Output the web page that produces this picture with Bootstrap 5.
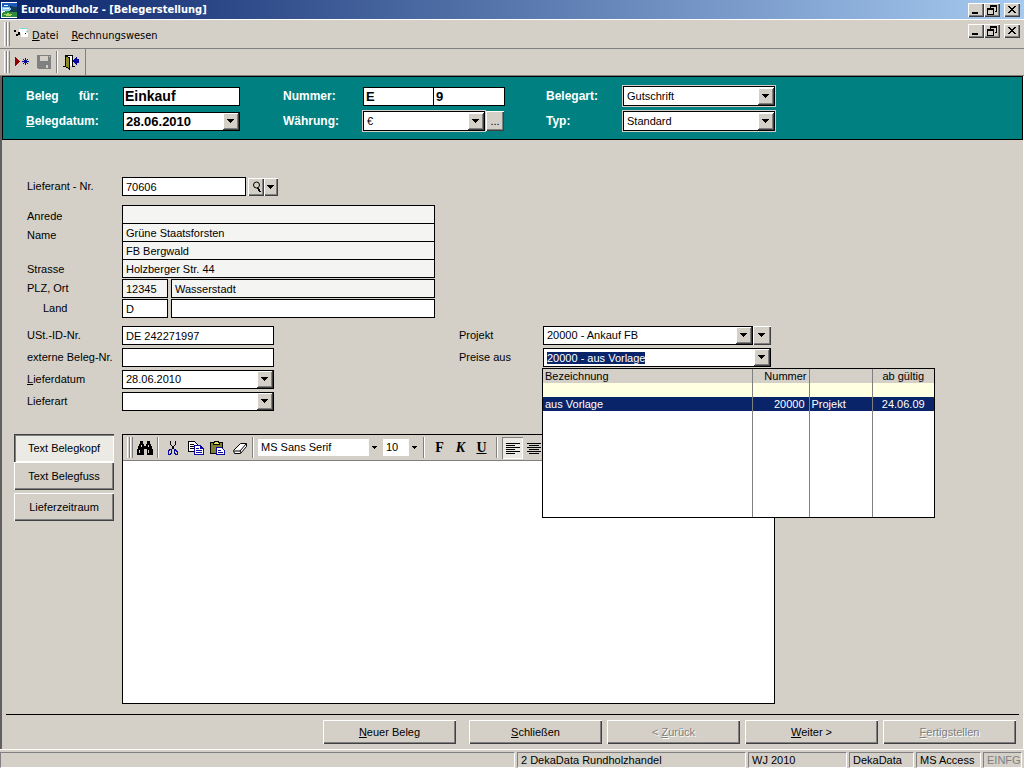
<!DOCTYPE html>
<html lang="de">
<head>
<meta charset="utf-8">
<meta name="viewport" content="width=device-width, initial-scale=1">
<title>EuroRundholz - [Belegerstellung]</title>
<link href="https://cdn.jsdelivr.net/npm/bootstrap@5.3.0/dist/css/bootstrap.min.css" rel="stylesheet">
<style>
:root{--face:#d4d0c8;--shade:#808080;--navy:#0a246a;
--arrow:url("data:image/svg+xml,%3Csvg xmlns='http://www.w3.org/2000/svg' width='16' height='17' shape-rendering='crispEdges'%3E%3Cpath fill='%23404040' d='M0 0h16v17H0z'/%3E%3Cpath fill='%23fff' d='M0 0h15v16H0z'/%3E%3Cpath fill='%23808080' d='M1 1h14v15H1z'/%3E%3Cpath fill='%23d4d0c8' d='M1 1h13v14H1z'/%3E%3Cpath d='M4 6h7v1H4zM5 7h5v1H5zM6 8h3v1H6zM7 9h1v1H7z'/%3E%3C/svg%3E");
--arrow-flat:url("data:image/svg+xml,%3Csvg xmlns='http://www.w3.org/2000/svg' width='10' height='17' shape-rendering='crispEdges'%3E%3Cpath fill='%23d4d0c8' d='M0 0h10v17H0z'/%3E%3Cpath d='M3 7h5v1H3zM4 8h3v1H4zM5 9h1v1H5z'/%3E%3C/svg%3E");}
body{background:var(--face);color:#000;font:11px/13px "Liberation Sans",Arial,sans-serif}
svg{display:block;shape-rendering:crispEdges}

/* window chrome */
.shell-font{font-family:"DejaVu Sans Condensed","DejaVu Sans",sans-serif}
.titlebar{height:19px;background:linear-gradient(90deg,#0a246a,#a6caf0);color:#fff}
.app-icon{margin:0 4px 0 1px}
.menubar{height:30px;border-top:1px solid #fff;border-bottom:1px solid var(--shade)}
.menubar a{color:#000;text-decoration:none;padding-top:2px}
.menubar a+a{margin-left:13px}
.toolbar{height:27px;border-bottom:1px solid var(--shade)}
.toolgroup{border-right:1px solid var(--shade);padding:0 6px 0 4px}
.grips{width:6px;align-self:stretch;margin:2px 0;background:linear-gradient(90deg,#fff 1px,var(--face) 1px 2px,var(--shade) 2px 3px,#fff 3px 4px,var(--face) 4px 5px,var(--shade) 5px)}
.vline{width:2px;align-self:stretch;margin:2px 0;border-left:1px solid var(--shade);border-right:1px solid #fff}

/* buttons */
.btn{--bs-btn-color:#000;--bs-btn-hover-color:#000;--bs-btn-active-color:#000;--bs-btn-disabled-color:#808080;--bs-btn-disabled-opacity:1;--bs-btn-font-size:11px;--bs-btn-line-height:13px;--bs-btn-padding-x:0;--bs-btn-padding-y:0;--bs-btn-border-radius:0;--bs-btn-border-width:0;background:var(--face)}
.btn:disabled{text-shadow:1px 1px #fff}
.raised{box-shadow:inset 1px 1px #fff,inset -1px -1px #404040,inset -2px -2px var(--shade)}
.win{width:16px;height:14px;display:grid;place-items:center}
.plain{background:none}

/* form header */
.form-area{border-left:2px solid #606060;border-right:1px solid #fff}
.kopf{background:#008080;border:1px solid #000;color:#fff;font-weight:bold;font-size:12px;padding:9px 0 8px 23px;display:grid;grid-template-columns:97px 160px 80px 183px 77px 152px;row-gap:5px;align-items:center;grid-auto-rows:20px}

/* fields */
.form-control,.form-select{height:19px;min-height:0;border:1px solid #000;border-radius:0;padding:0 3px;font:inherit;color:#000;background-color:#fff;box-shadow:none}
.form-control:focus,.form-select:focus{border-color:#000;box-shadow:none;color:#000;background-color:#fff}
.form-control::selection{background:var(--navy);color:#fff}
.form-select,.combo{background-image:var(--arrow);background-repeat:no-repeat;background-position:right 0 center;background-size:16px 17px;padding-right:18px}
.framed{height:20px;outline:1px solid var(--face);font-size:11px;font-weight:normal}
.big{font-size:14px;padding:0 1px}
.mid{font-size:13px;padding:0 2px}
.locked{background-color:#f4f4f2!important}
.w-kopf{width:117px}.w-half{width:71px}.w-adr{width:313px}.w-plz{width:46px}.w-feld{width:152px}.w-proj{width:210px}.w-preis{width:228px}.w-nr{width:124px}.w-curr{width:122px}
.w-ort{width:264px;margin-left:3px}
.pick-btn{width:18px;margin-left:1px}
.find-btn{margin-left:2px}

/* form body */
.daten{padding:37px 0 0 25px}
.zeile{display:flex;align-items:center}
.zeile>label{width:95px;flex:none}
.adr-block{margin-top:9px}
.adr .form-control+.form-control{margin-top:-1px}
.adr-labels{width:95px;padding-top:5px}
.adr-labels .nach-anrede{margin-top:6px}
.adr-labels .nach-name{margin-top:21px}
.ort-block{margin-top:1px;row-gap:1px}
.stapel{row-gap:3px}
.left-col{width:432px}
.right-col label{width:84px}

/* open list of the price combo box */
.picker{width:393px;height:150px;top:20px;left:-1px;border:1px solid #000;background:#fff;z-index:5}
.picker table{width:100%;height:100%;border-collapse:collapse}
.picker th,.picker td{height:14px;padding:0 2px;font-weight:normal;border-right:1px solid var(--shade);line-height:14px}
.picker th:last-child,.picker td:last-child{border-right:0;text-align:center}
.picker th{background:var(--face)}
.picker .leer td{background:#ffffe1}
.picker .wahl td{background:var(--navy);color:#fff}
.picker .rest td{height:auto}
.c-name{width:209px}.c-nr{width:57px}.c-typ{width:63px}

/* text editor */
.werk{padding:23px 12px 10px 12px}
.side{width:100px}
.side .btn{height:28px}
.side .btn:last-child{margin-top:3px}
.side .on{box-shadow:inset 1px 1px #404040,inset 2px 2px var(--shade),inset -1px -1px #fff;background:#eceae5}
.editor{max-width:653px;border:1px solid #000;background:#fff;min-height:200px}
.edbar{height:26px;background:var(--face);border-bottom:1px solid var(--shade);padding-left:4px}
.edbar .form-select{height:17px;border:0;background-image:var(--arrow-flat);background-size:10px 17px;padding-right:10px}
.edbar .ico{margin-left:6px}
.edbar .font{width:121px}
.edbar .size{width:36px}
.fmt{width:21px;height:22px;font:bold 14px/20px "Liberation Serif",serif}
.fmt.on{box-shadow:inset 1px 1px var(--shade),inset -1px -1px #fff;background:#ebe9e4}
.editor textarea{border:0;resize:none;height:auto}

/* bottom rows */
.rule{height:1px;background:#000;margin:0 4px}
.navrow{padding:5px 7px 5px 0;gap:5px}
.navrow .btn{width:133px;height:24px}
.navrow .neu{margin-right:8px}
.statusbar{height:19px;border-top:1px solid #fff;padding:2px 2px 0 0;gap:2px}
.statusbar span{border:1px solid;border-color:var(--shade) #fff #fff var(--shade);height:16px;line-height:15px;padding-left:3px;white-space:nowrap}
.p-firma{width:229px}.p-wj{width:99px}.p-app{width:65px}.p-mode{width:39px;color:#808080}
</style>
</head>
<body class="d-flex flex-column min-vh-100">
<header class="shell-font">
  <div class="titlebar d-flex align-items-center">
    <svg width="16" height="16" class="app-icon bg-white" viewBox="0 0 16 16"><path fill="#1c5cb8" d="M1 1h15v5H1z"/><path fill="#8cc8f0" d="M1 5h9v4H1z"/><path fill="#e8f6ff" d="M3 3h4v1H3zM2 6h6v1H2z"/><path fill="#163c54" d="M9 4h3v1h4v6H7V9h2V8h1V6H9z"/><path fill="#2e8d3a" d="M1 11l4-2 5 1h6v5H1z"/><path fill="#a8d860" d="M1 13l6-2 5 2-4 1z"/></svg>
    <strong>EuroRundholz - [Belegerstellung]</strong>
    <div class="d-flex ms-auto me-1">
      <button class="btn raised win" aria-label="Minimieren"><svg width="14" height="12"><path d="M3 8h6v2H3z"/></svg></button>
      <button class="btn raised win" aria-label="Wiederherstellen"><svg width="14" height="12"><path d="M5 1h7v2H5zM5 3h1v1H5zM11 3h1v5h-1zM10 7h1v1h-1zM2 4h7v2H2zM2 6h1v5H2zM8 6h1v5H8zM3 10h5v1H3z"/></svg></button>
      <button class="btn raised win ms-1" aria-label="Schließen"><svg width="14" height="12"><path d="M3 2h2v1h1v1h2V3h1V2h2v1h-1v1H9v1H8v1h1v1h1v1h1v1H9V8H8V7H6v1H5v1H3V8h1V7h1V6h1V5H5V4H4V3H3z"/></svg></button>
    </div>
  </div>
  <nav class="menubar d-flex align-items-center">
    <span class="grips ms-1"></span>
    <svg width="14" height="16" class="ms-1" viewBox="0 0 14 16"><path fill="#fff" d="M5 3h8v4h1v4H7V7H5z"/><path fill="#7fd8d8" d="M6 2h7v1H6zM12 5h2v1h-2z"/><path d="M0 4h2v2H0zM4 6h2v3H4zM2 8h2v2H2zM11 7h1v1h-1z"/></svg>
    <a href="#" class="ms-1"><u>D</u>atei</a>
    <a href="#"><u>R</u>echnungswesen</a>
    <div class="d-flex ms-auto align-self-start pt-1 me-1">
      <button class="btn raised win" aria-label="Fenster minimieren"><svg width="14" height="12"><path d="M3 8h6v2H3z"/></svg></button>
      <button class="btn raised win" aria-label="Fenster wiederherstellen"><svg width="14" height="12"><path d="M5 1h7v2H5zM5 3h1v1H5zM11 3h1v5h-1zM10 7h1v1h-1zM2 4h7v2H2zM2 6h1v5H2zM8 6h1v5H8zM3 10h5v1H3z"/></svg></button>
      <button class="btn raised win ms-1" aria-label="Fenster schließen"><svg width="14" height="12"><path d="M3 2h2v1h1v1h2V3h1V2h2v1h-1v1H9v1H8v1h1v1h1v1h1v1H9V8H8V7H6v1H5v1H3V8h1V7h1V6h1V5H5V4H4V3H3z"/></svg></button>
    </div>
  </nav>
  <div class="toolbar d-flex">
    <div class="toolgroup d-flex align-items-center">
      <span class="grips"></span>
      <button class="btn plain ms-1" aria-label="Neuer Datensatz"><svg width="18" height="16"><path fill="#900000" d="M1 3h1v1h1v1h1v1h1v1h1v1H5v1H4v1H3v1H2v1H1z"/><path stroke="#0a0aa0" d="M11.500 4v7M8 7.500h7M9 5l5 5M14 5l-5 5"/></svg></button>
      <button class="btn plain ms-1" aria-label="Speichern" disabled><svg width="16" height="16"><path fill="#808080" d="M1 1h14v14H2v-1H1z"/><path fill="#d4d0c8" d="M4 2h8v5H4zM10 11h2v3h-2zM13 2h1v1h-1z"/></svg></button>
      <span class="vline mx-1"></span>
      <button class="btn plain" aria-label="Beenden"><svg width="17" height="16"><path fill="none" stroke="#000" d="M1 12.500h2.500V1.500h7v11H13"/><path fill="#fff" d="M5 2h5v10H5z"/><path fill="#8c8c20" stroke="#000" d="M3.500 1.500l4 2.500v11l-4-2.500z"/><path fill="#0a0aa0" d="M11 6h1V5h1V4h1V3h1v2h2v4h-2v2h-1v-1h-1V9h-1V8h-1z"/></svg></button>
    </div>
  </div>
</header>

<main class="form-area flex-grow-1 d-flex flex-column">
  <section class="kopf">
    <label for="beleg" class="d-flex gap-3"><span>Beleg</span><span class="ps-1">für:</span></label>
    <input id="beleg" class="form-control w-kopf big" value="Einkauf">
    <label for="nr">Nummer:</label>
    <div class="d-flex"><input id="nr" class="form-control w-half mid" value="E"><input aria-label="Laufende Nummer" class="form-control w-half mid border-start-0" value="9"></div>
    <label for="art">Belegart:</label>
    <select id="art" class="form-select framed"><option>Gutschrift</option></select>
    <label for="bdat"><u>B</u>elegdatum:</label>
    <select id="bdat" class="form-select w-kopf mid"><option>28.06.2010</option></select>
    <label for="waehrung">Währung:</label>
    <div class="d-flex"><select id="waehrung" class="form-select framed w-curr"><option>€</option></select><button class="btn raised pick-btn" aria-label="Währung wählen">...</button></div>
    <label for="typ">Typ:</label>
    <select id="typ" class="form-select framed"><option>Standard</option></select>
  </section>

  <section class="daten">
    <div class="zeile">
      <label for="lief">Lieferant - Nr.</label>
      <input id="lief" class="form-control w-nr" value="70606">
      <button class="btn raised find-btn" aria-label="Suchen"><svg width="16" height="18"><path fill="none" stroke="#000" shape-rendering="auto" d="M11.500 7a3 3 0 1 1-6 0a3 3 0 1 1 6 0z"/><path stroke="#000" stroke-width="2" d="M10 10l2 4"/></svg></button>
      <button class="btn raised" aria-label="Suchliste"><svg width="14" height="18"><path d="M3 7h7v1H3zM4 8h5v1H4zM5 9h3v1H5zM6 10h1v1H6z"/></svg></button>
    </div>
    <div class="d-flex adr-block">
      <div class="adr-labels">
        <label for="anrede" class="d-block">Anrede</label>
        <label for="name1" class="d-block nach-anrede">Name</label>
        <label for="str" class="d-block nach-name">Strasse</label>
      </div>
      <div class="adr w-adr">
        <input id="anrede" class="form-control locked" readonly>
        <input id="name1" class="form-control locked" value="Grüne Staatsforsten" readonly>
        <input aria-label="Name 2" class="form-control locked" value="FB Bergwald" readonly>
        <input id="str" class="form-control locked" value="Holzberger Str. 44" readonly>
      </div>
    </div>
    <div class="d-grid ort-block">
      <div class="zeile">
        <label for="plz">PLZ, Ort</label>
        <input id="plz" class="form-control locked w-plz" value="12345" readonly>
        <input aria-label="Ort" class="form-control locked w-ort" value="Wasserstadt" readonly>
      </div>
      <div class="zeile">
        <label for="land" class="ps-3">Land</label>
        <input id="land" class="form-control w-plz" value="D">
        <input aria-label="Landesname" class="form-control w-ort">
      </div>
    </div>
    <div class="d-flex mt-2">
      <div class="left-col d-grid stapel">
        <div class="zeile"><label for="ust">USt.-ID-Nr.</label><input id="ust" class="form-control w-feld" value="DE 242271997"></div>
        <div class="zeile"><label for="ext">externe Beleg-Nr.</label><input id="ext" class="form-control w-feld"></div>
        <div class="zeile"><label for="ldat"><u>L</u>ieferdatum</label><select id="ldat" class="form-select w-feld"><option>28.06.2010</option></select></div>
        <div class="zeile"><label for="lart">Lieferart</label><select id="lart" class="form-select w-feld"><option></option></select></div>
      </div>
      <div class="right-col d-grid stapel align-content-start">
        <div class="zeile"><label for="proj">Projekt</label><select id="proj" class="form-select w-proj"><option>20000 - Ankauf FB</option></select><button class="btn raised" aria-label="Projektliste"><svg width="18" height="19"><path d="M5 7h7v1H5zM6 8h5v1H6zM7 9h3v1H7zM8 10h1v1H8z"/></svg></button></div>
        <div class="zeile"><label for="preise">Preise aus</label>
          <div class="position-relative">
            <input id="preise" class="form-control combo w-preis" value="20000 - aus Vorlage" role="combobox" aria-expanded="true">
            <div class="picker position-absolute">
              <table>
                <colgroup><col class="c-name"><col class="c-nr"><col class="c-typ"><col></colgroup>
                <thead><tr><th>Bezeichnung</th><th class="text-end">Nummer</th><th></th><th>ab gültig</th></tr></thead>
                <tbody>
                  <tr class="leer"><td></td><td></td><td></td><td></td></tr>
                  <tr class="wahl"><td>aus Vorlage</td><td class="text-end pe-1">20000</td><td>Projekt</td><td>24.06.09</td></tr>
                  <tr class="rest"><td></td><td></td><td></td><td></td></tr>
                </tbody>
              </table>
            </div>
          </div>
        </div>
      </div>
    </div>
  </section>

  <section class="werk flex-grow-1 d-flex gap-2">
    <div class="side d-flex flex-column">
      <button class="btn on">Text Belegkopf</button>
      <button class="btn raised">Text Belegfuss</button>
      <button class="btn raised">Lieferzeitraum</button>
    </div>
    <div class="editor flex-grow-1 d-flex flex-column">
      <div class="edbar d-flex align-items-center overflow-hidden">
        <span class="grips"></span>
        <button class="btn plain ms-1" aria-label="Suchen"><svg width="16" height="16"><path d="M3 1h3v3h1v2h2V4h1V1h3v3h1v2h1v3h1v6h-6V9H7v6H0V9h1V6h1V4h1z"/><path fill="#d4d0c8" d="M4 5h1v2H4zM11 5h1v2h-1zM2 10h1v3H2zM11 10h1v3h-1z"/></svg></button>
        <span class="vline mx-1"></span>
        <button class="btn plain ms-1" aria-label="Ausschneiden"><svg width="15" height="16"><path fill="none" stroke="#000" d="M3.500 1v3l4 6M8.500 1v3l-4 6"/><path fill="none" stroke="#0a0aa0" d="M4.500 9.500v3l-1 2h-2v-3l1-2zM7.500 9.500l2 1 1 2v2h-2l-1-2z"/></svg></button>
        <button class="btn plain ico" aria-label="Kopieren"><svg width="16" height="16"><path fill="#fff" stroke="#000" d="M.500 1.500h6l3 3v7h-9z"/><path stroke="#000" d="M2 4.500h4M2 6.500h4M2 8.500h4"/><path fill="#fff" stroke="#0a0aa0" d="M6.500 5.500h6l3 3v6h-9z"/><path stroke="#0a0aa0" d="M8 8.500h3M8 10.500h6M8 12.500h6M12.500 6v2.500H15"/></svg></button>
        <button class="btn plain ico" aria-label="Einfügen"><svg width="16" height="16"><path fill="#808030" stroke="#000" d="M.500 2.500h12v11h-12z"/><path fill="#e8e060" stroke="#000" d="M3.500 4.500v-2h1v-1h4v1h1v2z"/><path fill="#fff" stroke="#0a0aa0" d="M6.500 7.500h5l3 3v4h-8z"/><path stroke="#0a0aa0" d="M8 10.500h3M8 12.500h5"/></svg></button>
        <button class="btn plain ico" aria-label="Löschen"><svg width="16" height="16" style="shape-rendering:auto"><path fill="#fff" stroke="#000" d="M8.500 3.500h6v3l-6 7h-6l-1-3z"/><path fill="none" stroke="#000" d="M14 4l-6 7H2M8 11l1 2"/></svg></button>
        <span class="vline mx-1"></span>
        <select class="form-select font" aria-label="Schriftart"><option>MS Sans Serif</option></select>
        <select class="form-select size ms-1" aria-label="Schriftgrad"><option>10</option></select>
        <span class="vline mx-1"></span>
        <button class="btn plain fmt">F</button><button class="btn plain fmt fst-italic">K</button><button class="btn plain fmt text-decoration-underline">U</button>
        <span class="vline mx-1"></span>
        <button class="btn fmt on" aria-label="Linksbündig"><svg width="21" height="22"><path stroke="#000" d="M4 6.500h14M4 8.500h9M4 10.500h14M4 12.500h9M4 14.500h14M4 16.500h9"/></svg></button>
        <button class="btn plain fmt" aria-label="Zentriert"><svg width="21" height="22"><path stroke="#000" d="M4 6.500h14M6 8.500h10M4 10.500h14M6 12.500h10M4 14.500h14M6 16.500h10"/></svg></button>
      </div>
      <textarea class="form-control flex-grow-1" aria-label="Text Belegkopf"></textarea>
    </div>
  </section>

  <div class="rule"></div>
  <div class="navrow d-flex justify-content-end">
    <button class="btn raised neu"><u>N</u>euer Beleg</button>
    <button class="btn raised"><u>S</u>chließen</button>
    <button class="btn raised" disabled>&lt; <u>Z</u>urück</button>
    <button class="btn raised"><u>W</u>eiter &gt;</button>
    <button class="btn raised" disabled><u>F</u>ertigstellen</button>
  </div>
</main>

<footer class="statusbar d-flex">
  <span class="flex-grow-1"></span>
  <span class="p-firma">2 DekaData Rundholzhandel</span>
  <span class="p-wj">WJ 2010</span>
  <span class="p-app">DekaData</span>
  <span class="p-app">MS Access</span>
  <span class="p-mode">EINFG</span>
</footer>
<script src="https://cdn.jsdelivr.net/npm/bootstrap@5.3.0/dist/js/bootstrap.bundle.min.js"></script>
<script>
// The price box opens focused with its whole value selected.
const preise = document.getElementById('preise');
preise.focus({preventScroll: true});
preise.select();
</script>
</body>
</html>
